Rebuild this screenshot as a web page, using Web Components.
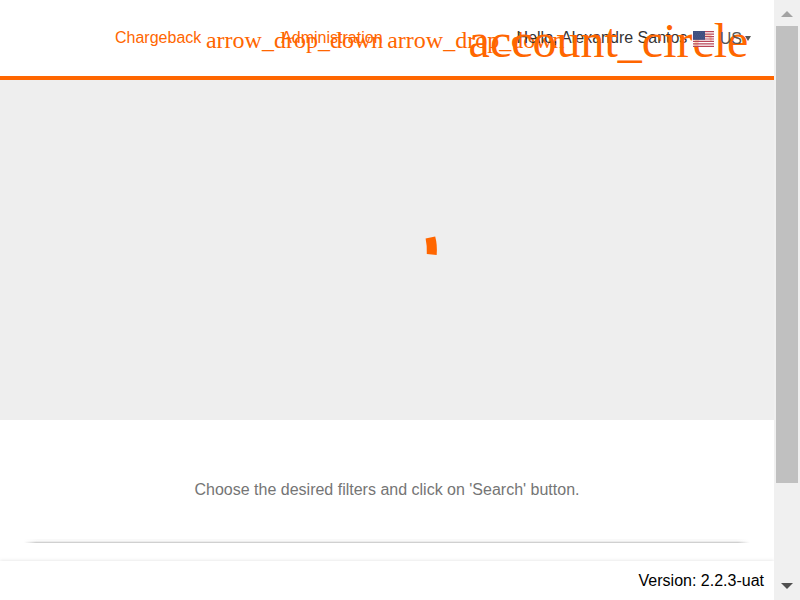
<!DOCTYPE html>
<html lang="en">
<head>
<meta charset="utf-8">
<title>Chargeback</title>
<style>
html,body{margin:0;height:100%;overflow:hidden}
body{font:16px/20px "Liberation Sans",Arial,sans-serif;color:#000;background:#fff}
</style>
</head>
<body>
<app-shell></app-shell>
<script>
const define = (name, html) => customElements.define(name, class extends HTMLElement {
  constructor() {
    super();
    const t = document.createElement('template');
    t.innerHTML = html;
    this.attachShadow({mode: 'open'}).append(t.content.cloneNode(true));
  }
});

define('ligature-icon', `<style>
:host{display:block;flex:none;width:var(--size,24px);height:var(--size,24px);font:var(--size,24px)/1 "Liberation Serif",serif;color:#ff6600;white-space:nowrap}
</style><slot></slot>`);

define('nav-item', `<style>
:host{display:flex;align-items:center;gap:4.7px;color:#ff6600;white-space:nowrap;flex:none}
ligature-icon{margin-top:4px}
</style><span><slot></slot></span><ligature-icon>arrow_drop_down</ligature-icon>`);

define('user-badge', `<style>
:host{display:flex;align-items:center;color:#333;white-space:nowrap;flex:none}
ligature-icon{--size:48px;position:relative;z-index:1;margin-top:6px}
</style><ligature-icon>account_circle</ligature-icon><span><slot></slot></span>`);

define('us-flag', `<style>
:host{display:block;width:21px;height:16px}
svg{display:block}
</style><svg width="21" height="16" viewBox="0 0 21 16">
<rect width="21" height="16" fill="#fff" opacity=".7"/>
<path d="M0 .6h21M0 3.07h21M0 5.53h21M0 8h21M0 10.46h21M0 12.92h21M0 15.4h21" stroke="#b8475a" stroke-width="1.23"/>
<rect width="12" height="8.8" fill="#404f80"/>
<path d="M1 1.5h11M2 3.3h10M1 5.1h11M2 6.9h10" stroke="#66739a" stroke-width=".4" stroke-dasharray=".7 1.3"/>
</svg>`);

define('locale-picker', `<style>
:host{display:flex;align-items:center;color:#555;position:relative;z-index:2;flex:none}
us-flag{margin:2px 6px 0 0}
.label{margin-top:1px}
svg{display:block;margin:0 0 0 3px}
</style><us-flag></us-flag><span class="label"><slot></slot></span><svg width="6" height="5"><path d="M0 0h6L3 5z" fill="#555"/></svg>`);

define('top-bar', `<style>
:host{display:flex;box-sizing:border-box;height:80px;border-bottom:4px solid #ff6600;background:#fff;padding:0 23px 0 115px;align-items:center;flex:none}
nav{display:flex;gap:51.2px}
user-badge{margin-left:auto}
locale-picker{margin-left:5.4px}
</style><nav><nav-item>Chargeback</nav-item><nav-item>Administration</nav-item></nav>
<user-badge>Hello, Alexandre Santos</user-badge><locale-picker>US</locale-picker>`);

define('loading-panel', `<style>
:host{display:block;box-sizing:border-box;height:340px;background:#eee;padding:156px 0 0 425px;flex:none}
svg{display:block}
</style><svg width="14" height="20"><path d="M.6 2.6L10.2.5Q12.5 9 11.7 19L1.8 18Q2.2 10 .6 2.6Z" fill="#ff6600"/></svg>`);

define('filter-hint', `<style>
:host{display:flex;flex-direction:column;flex:1;color:#757575}
p{margin:0;padding-top:60px;text-align:center}
.rule{margin:37px 24px 0;height:6px;background:
 linear-gradient(90deg,#fff0,#d0d0d0 12px,#d0d0d0 calc(100% - 12px),#fff0) 0 5px/100% 1px no-repeat,
 linear-gradient(90deg,#fff0,#ececec 12px,#ececec calc(100% - 12px),#fff0) 0 4px/100% 1px no-repeat,
 linear-gradient(90deg,#fff0,#f9f9f9 14px,#f9f9f9 calc(100% - 14px),#fff0) 0 2px/100% 2px no-repeat}
</style><p><slot></slot></p><div class="rule"></div>`);

define('version-footer', `<style>
:host{display:block;box-sizing:border-box;height:39px;padding:10px 10px 0;text-align:right;background:#fff;box-shadow:0 0 4px rgba(0,0,0,.13);flex:none}
</style><slot></slot>`);

define('scroll-track', `<style>
:host{display:flex;flex-direction:column;align-items:center;width:26px;box-sizing:border-box;background:#f0f0f0;position:relative;flex:none}
.up{margin-top:11px}.thumb{width:22px;height:457px;background:#c0c0c0;margin-top:9px}
.down{margin:auto 0 11px}
svg{display:block;flex:none}
</style><svg class="up" width="12" height="6"><path d="M0 6L6 0L12 6Z" fill="#a3a3a3"/></svg>
<div class="thumb"></div>
<svg class="down" width="12" height="6"><path d="M0 0H12L6 6Z" fill="#505050"/></svg>`);

define('app-shell', `<style>
:host{display:flex;width:800px;height:600px;overflow:hidden}
main{display:flex;flex-direction:column;width:774px;flex:none;overflow:hidden}
</style><main><top-bar></top-bar><loading-panel></loading-panel>
<filter-hint>Choose the desired filters and click on 'Search' button.</filter-hint>
<version-footer>Version: 2.2.3-uat</version-footer></main><scroll-track></scroll-track>`);
</script>
</body>
</html>
